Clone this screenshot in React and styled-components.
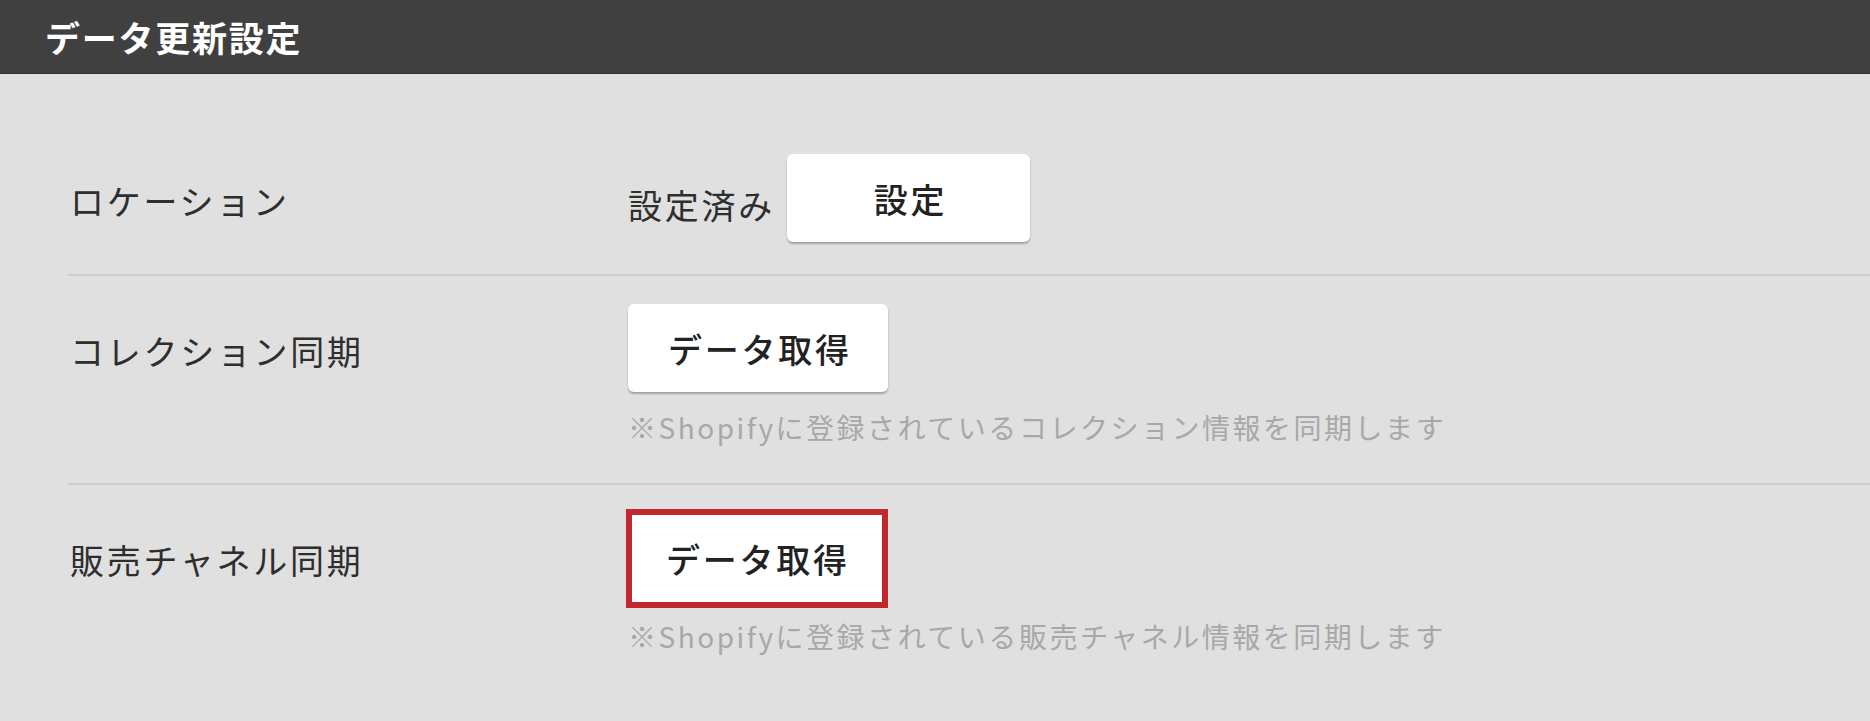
import React from 'react';
import styled, { createGlobalStyle, css } from 'styled-components';

const GlobalStyle = createGlobalStyle`
  html, body {
    margin: 0;
    padding: 0;
    background: #e0e0e0;
  }
  body {
    font-family: "Noto Sans CJK JP", "Noto Sans", sans-serif;
  }
`;

const Page = styled.div`
  min-height: 721px;
  background: #e0e0e0;
`;

const Header = styled.header`
  box-sizing: border-box;
  height: 74px;
  display: flex;
  align-items: center;
  padding-left: 45px;
  background: #404040;
  border-bottom: 1px solid #333;
`;

const Title = styled.h1`
  margin: 0;
  font-size: 35px;
  font-weight: 700;
  color: #fff;
  letter-spacing: 0.05em;
`;

const Body = styled.main`
  padding: 52px 0 0 68px;
`;

const Row = styled.section`
  display: grid;
  grid-template-columns: 560px 1fr;
  align-items: start;
  padding: ${(props) => (props.withNote ? '28px 0 36px' : '28px 0 32px')};
  border-bottom: ${(props) => (props.last ? 'none' : '2px solid #cdcdcd')};
`;

const Label = styled.div`
  box-sizing: border-box;
  height: 88px;
  padding: 6px 0 0 2px;
  font-size: 34px;
  line-height: 82px;
  color: #2e2e2e;
  letter-spacing: 0.08em;
`;

const Content = styled.div`
  display: flex;
  flex-direction: column;
  align-items: flex-start;
`;

const Inline = styled.div`
  display: flex;
  align-items: center;
  gap: 12px;
`;

const Status = styled.span`
  padding-top: 12px;
  font-size: 34px;
  color: #2e2e2e;
  letter-spacing: 0.08em;
`;

const Button = styled.button`
  box-sizing: border-box;
  height: 88px;
  min-width: 243px;
  padding: 0 36px 0 40px;
  background: #fff;
  border: none;
  border-radius: 6px;
  box-shadow: 0 2px 2px rgba(0, 0, 0, 0.28);
  font-family: inherit;
  font-size: 34px;
  font-weight: 500;
  color: #222;
  letter-spacing: 0.08em;
  cursor: pointer;

  ${(props) =>
    props.highlighted &&
    css`
      height: 99px;
      margin: -4px -2px -7px -2px;
      padding: 0 32px 0 34px;
      border: 6px solid #c1272d;
      border-radius: 0;
      box-shadow: none;
    `}
`;

const Note = styled.p`
  margin: 15px 0 0;
  font-size: 28px;
  line-height: 40px;
  color: #a8a8a8;
  letter-spacing: 0.09em;
`;

const App = () => {
  return (
    <Page>
      <GlobalStyle />
      <Header>
        <Title>データ更新設定</Title>
      </Header>
      <Body>
        <Row>
          <Label>ロケーション</Label>
          <Content>
            <Inline>
              <Status>設定済み</Status>
              <Button>設定</Button>
            </Inline>
          </Content>
        </Row>
        <Row withNote>
          <Label>コレクション同期</Label>
          <Content>
            <Button>データ取得</Button>
            <Note>※Shopifyに登録されているコレクション情報を同期します</Note>
          </Content>
        </Row>
        <Row withNote last>
          <Label>販売チャネル同期</Label>
          <Content>
            <Button highlighted>データ取得</Button>
            <Note>※Shopifyに登録されている販売チャネル情報を同期します</Note>
          </Content>
        </Row>
      </Body>
    </Page>
  );
};

export default App;
